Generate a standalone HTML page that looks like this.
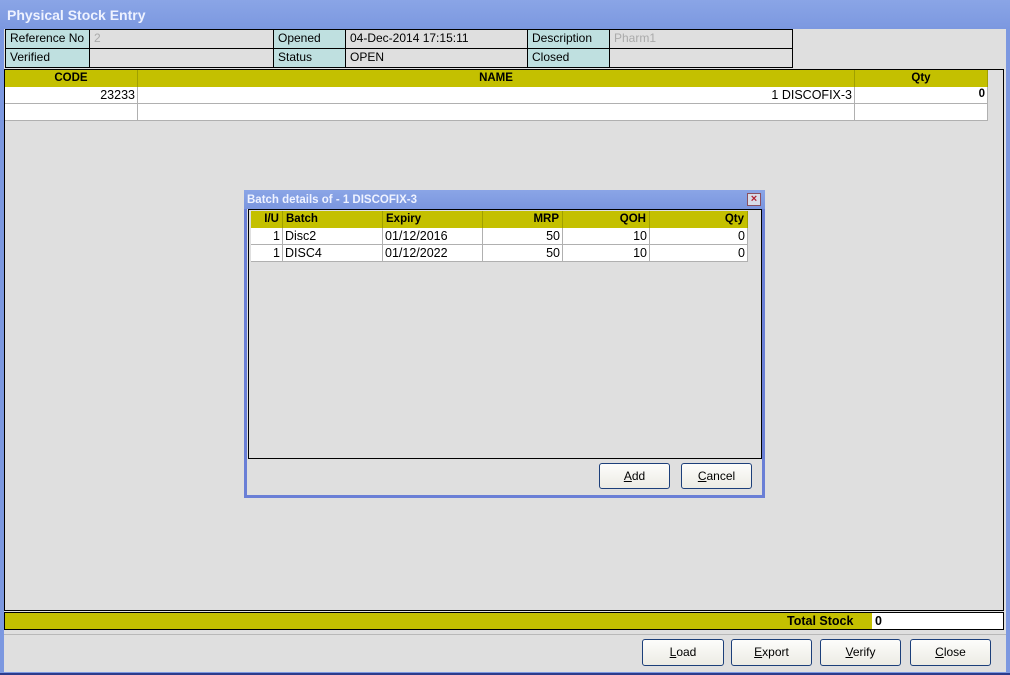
<!DOCTYPE html>
<html><head><style>
*{box-sizing:border-box;margin:0;padding:0}
body{width:1010px;height:675px;background:#dfdfdf;font-family:"Liberation Sans",sans-serif;font-size:12px;color:#000;position:relative;overflow:hidden}
.a{position:absolute}
.lab{background:#bfe0e0}
.c{position:absolute;border:1px solid #000;padding:1px 4px;white-space:nowrap;overflow:hidden}
.g{position:absolute;border-right:1px solid #b0b0b0;border-bottom:1px solid #b0b0b0;background:#fff;padding:1px 2px;white-space:nowrap;font-size:12.5px}
.hh{position:absolute;background:#c4c000;font-weight:bold;border-right:1px solid #a0a000;padding:2px 3px;white-space:nowrap;font-size:11.5px}
.btn{position:absolute;border:1px solid #1c3f7a;border-radius:3px;background:linear-gradient(#fdfdfb,#ecebe4);text-align:center;line-height:24px;font-size:12px}
</style></head><body>
<div class="a" style="left:0;top:0;width:1010px;height:675px;background:#7c98e0"></div>
<div class="a" style="left:0;top:0;width:1010px;height:29px;background:linear-gradient(#8aa5e6,#7c98e0)"></div>
<div class="a" style="left:7px;top:7px;color:#eef2ff;font-weight:bold;font-size:14px">Physical Stock Entry</div>
<div class="a" style="left:4px;top:29px;width:1002px;height:643px;background:#dfdfdf"></div>
<div class="a" style="left:0;top:673px;width:1010px;height:2px;background:#2c3c8c"></div>

<div class="c lab" style="left:5px;top:29px;width:85px;height:20px">Reference No</div>
<div class="c" style="left:89px;top:29px;width:185px;height:20px;color:#aaa">2</div>
<div class="c lab" style="left:273px;top:29px;width:73px;height:20px">Opened</div>
<div class="c" style="left:345px;top:29px;width:183px;height:20px">04-Dec-2014 17:15:11</div>
<div class="c lab" style="left:527px;top:29px;width:83px;height:20px">Description</div>
<div class="c" style="left:609px;top:29px;width:184px;height:20px;color:#aaa">Pharm1</div>
<div class="c lab" style="left:5px;top:48px;width:85px;height:20px">Verified</div>
<div class="c" style="left:89px;top:48px;width:185px;height:20px"></div>
<div class="c lab" style="left:273px;top:48px;width:73px;height:20px">Status</div>
<div class="c" style="left:345px;top:48px;width:183px;height:20px">OPEN</div>
<div class="c lab" style="left:527px;top:48px;width:83px;height:20px">Closed</div>
<div class="c" style="left:609px;top:48px;width:184px;height:20px"></div>

<div class="a" style="left:4px;top:69px;width:1000px;height:542px;border:1px solid #000"></div>
<div class="hh" style="left:5px;top:70px;width:133px;height:17px;text-align:center">CODE</div>
<div class="hh" style="left:138px;top:70px;width:717px;height:17px;text-align:center">NAME</div>
<div class="hh" style="left:855px;top:70px;width:133px;height:17px;text-align:center">Qty</div>
<div class="g" style="left:5px;top:87px;width:133px;height:17px;text-align:right">23233</div>
<div class="g" style="left:138px;top:87px;width:717px;height:17px;text-align:right">1 DISCOFIX-3</div>
<div class="g" style="left:855px;top:87px;width:133px;height:17px;text-align:right;font-weight:bold;font-size:11.5px">0</div>
<div class="g" style="left:5px;top:104px;width:133px;height:17px"></div>
<div class="g" style="left:138px;top:104px;width:717px;height:17px"></div>
<div class="g" style="left:855px;top:104px;width:133px;height:17px"></div>

<div class="a" style="left:4px;top:612px;width:1000px;height:18px;border:1px solid #000;background:#c4c000"></div>
<div class="a" style="left:787px;top:614px;font-weight:bold;font-size:12.5px">Total Stock</div>
<div class="a" style="left:872px;top:613px;width:131px;height:16px;background:#fff;font-weight:bold;font-size:12.5px;padding:1px 3px">0</div>
<div class="a" style="left:4px;top:634px;width:1002px;height:1px;background:#b8b8b8"></div>
<div class="btn" style="left:642px;top:639px;width:82px;height:27px"><u>L</u>oad</div>
<div class="btn" style="left:731px;top:639px;width:81px;height:27px"><u>E</u>xport</div>
<div class="btn" style="left:820px;top:639px;width:81px;height:27px"><u>V</u>erify</div>
<div class="btn" style="left:910px;top:639px;width:81px;height:27px"><u>C</u>lose</div>

<div class="a" style="left:244px;top:190px;width:521px;height:308px;background:#dfdfdf;border:3px solid #6a7fd6;border-top:none"></div>
<div class="a" style="left:244px;top:190px;width:521px;height:19px;background:linear-gradient(#8aa5e6,#7b96df)"></div>
<div class="a" style="left:247px;top:194px;color:#eef2ff;font-weight:bold;font-size:11.5px">Batch details of - 1 DISCOFIX-3</div>
<div class="a" style="left:747px;top:193px;width:14px;height:13px;background:#d8dce8;border:1px solid #8a5060;color:#b02030;font-weight:bold;font-size:11px;line-height:11px;text-align:center">×</div>
<div class="a" style="left:248px;top:209px;width:514px;height:250px;border:1px solid #000;background:#dfdfdf"></div>
<div class="hh" style="left:251px;top:211px;width:32px;height:17px;text-align:right">I/U</div>
<div class="hh" style="left:283px;top:211px;width:100px;height:17px">Batch</div>
<div class="hh" style="left:383px;top:211px;width:100px;height:17px">Expiry</div>
<div class="hh" style="left:483px;top:211px;width:80px;height:17px;text-align:right">MRP</div>
<div class="hh" style="left:563px;top:211px;width:87px;height:17px;text-align:right">QOH</div>
<div class="hh" style="left:650px;top:211px;width:98px;height:17px;text-align:right">Qty</div>
<div class="g" style="left:251px;top:228px;width:32px;height:17px;text-align:right">1</div>
<div class="g" style="left:283px;top:228px;width:100px;height:17px">Disc2</div>
<div class="g" style="left:383px;top:228px;width:100px;height:17px">01/12/2016</div>
<div class="g" style="left:483px;top:228px;width:80px;height:17px;text-align:right">50</div>
<div class="g" style="left:563px;top:228px;width:87px;height:17px;text-align:right">10</div>
<div class="g" style="left:650px;top:228px;width:98px;height:17px;text-align:right">0</div>
<div class="g" style="left:251px;top:245px;width:32px;height:17px;text-align:right">1</div>
<div class="g" style="left:283px;top:245px;width:100px;height:17px">DISC4</div>
<div class="g" style="left:383px;top:245px;width:100px;height:17px">01/12/2022</div>
<div class="g" style="left:483px;top:245px;width:80px;height:17px;text-align:right">50</div>
<div class="g" style="left:563px;top:245px;width:87px;height:17px;text-align:right">10</div>
<div class="g" style="left:650px;top:245px;width:98px;height:17px;text-align:right">0</div>
<div class="btn" style="left:599px;top:463px;width:71px;height:26px;line-height:24px"><u>A</u>dd</div>
<div class="btn" style="left:681px;top:463px;width:71px;height:26px;line-height:24px"><u>C</u>ancel</div>
</body></html>
